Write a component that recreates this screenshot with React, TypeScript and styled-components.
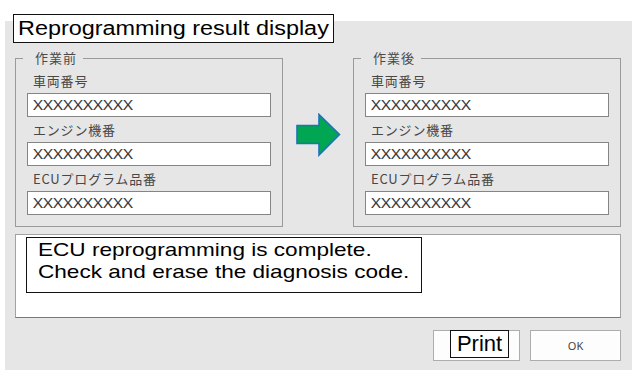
import styled, { createGlobalStyle } from "styled-components";

const GlobalStyle = createGlobalStyle`
  html, body {
    margin: 0;
    padding: 0;
    background: #ffffff;
  }
  body {
    font-family: "Noto Sans CJK JP", "Noto Sans", sans-serif;
  }
`;

type Field = { label: string; value: string };

const fields: Field[] = [
  { label: "車両番号", value: "XXXXXXXXXX" },
  { label: "エンジン機番", value: "XXXXXXXXXX" },
  { label: "ECUプログラム品番", value: "XXXXXXXXXX" },
];

function FieldList() {
  return (
    <>
      {fields.map((f) => (
        <FieldBlock key={f.label}>
          <FieldLabel>{f.label}</FieldLabel>
          <ValueBox>
            <ValueText>{f.value}</ValueText>
          </ValueBox>
        </FieldBlock>
      ))}
    </>
  );
}

export default function App() {
  return (
    <>
      <GlobalStyle />
      <Panel>
        <TitleBox>
          <Stretch $scale={1.2}>Reprogramming result display</Stretch>
        </TitleBox>
        <GroupRow>
          <GroupBox $width={268}>
            <Legend>作業前</Legend>
            <FieldList />
          </GroupBox>
          <ArrowCol>
            <svg width="45" height="44" viewBox="0 0 45 44">
              <path
                d="M1 12.5 H23 V1.5 L43.5 21.5 L23 42 V30.5 H1 Z"
                fill="#00a651"
                stroke="#1f72b8"
                strokeWidth="1.6"
                strokeLinejoin="miter"
              />
            </svg>
          </ArrowCol>
          <GroupBox>
            <Legend>作業後</Legend>
            <FieldList />
          </GroupBox>
        </GroupRow>
        <MessageArea>
          <MessageBox>
            <Stretch $scale={1.22}>ECU reprogramming is complete.</Stretch>
            <Stretch $scale={1.22}>Check and erase the diagnosis code.</Stretch>
          </MessageBox>
        </MessageArea>
        <ButtonRow>
          <DialogButton $width={87}>
            <PrintLabel>Print</PrintLabel>
          </DialogButton>
          <DialogButton $width={91}>
            <OkLabel>OK</OkLabel>
          </DialogButton>
        </ButtonRow>
      </Panel>
    </>
  );
}

const Panel = styled.div`
  margin: 21px 0 0 5px;
  width: 627px;
  height: 349px;
  box-sizing: border-box;
  background: #e6e6e6;
  padding: 0 11px 9px 10px;
  display: flex;
  flex-direction: column;
`;

const Stretch = styled.span<{ $scale: number }>`
  display: block;
  white-space: nowrap;
  transform: scaleX(${(p) => p.$scale});
  transform-origin: left center;
`;

const TitleBox = styled.div`
  align-self: flex-start;
  margin: -7px 0 0 -2px;
  width: 321px;
  height: 29px;
  box-sizing: border-box;
  border: 1px solid #111;
  background: #fff;
  padding: 0 0 0 4px;
  font-family: "Liberation Sans", Arial, sans-serif;
  font-size: 19.5px;
  line-height: 27px;
  color: #000;
`;

const GroupRow = styled.div`
  display: flex;
  margin-top: 8px;
`;

const GroupBox = styled.fieldset<{ $width?: number }>`
  margin: 0;
  ${(p) => (p.$width ? `width: ${p.$width}px;` : "flex: 1;")}
  box-sizing: border-box;
  border: 1px solid #9a9a9a;
  padding: 3px 11px 11px 11px;
  min-width: 0;
`;

const Legend = styled.legend`
  margin-left: -4px;
  padding: 0 6px 0 12px;
  font-size: 13px;
  line-height: 14px;
  letter-spacing: 1px;
  color: #4a4a4a;
`;

const FieldBlock = styled.div`
  display: flex;
  flex-direction: column;
`;

const FieldLabel = styled.div`
  height: 25px;
  line-height: 25px;
  padding-left: 6px;
  font-size: 13px;
  letter-spacing: 0.8px;
  color: #474747;
  white-space: nowrap;
`;

const ValueBox = styled.div`
  height: 24px;
  box-sizing: border-box;
  border: 1px solid #858585;
  background: #fff;
  padding-left: 5px;
  display: flex;
  align-items: center;
`;

const ValueText = styled.span`
  display: block;
  font-family: "Noto Sans", sans-serif;
  font-size: 14px;
  line-height: 16px;
  color: #3a3a3a;
  transform: scaleX(1.22);
  transform-origin: left center;
`;

const ArrowCol = styled.div`
  width: 70px;
  display: flex;
  justify-content: center;
  align-items: flex-start;
  padding-top: 62px;
  padding-left: 1px;
  box-sizing: border-box;
`;

const MessageArea = styled.div`
  margin-top: 7px;
  height: 85px;
  box-sizing: border-box;
  border: 1px solid #a2a2a2;
  border-bottom-color: #7a7a7a;
  background: #fff;
  padding: 2px 0 0 10px;
`;

const MessageBox = styled.div`
  width: 396px;
  height: 56px;
  box-sizing: border-box;
  border: 1px solid #111;
  background: #fff;
  padding: 1px 0 0 11px;
  font-family: "Liberation Sans", Arial, sans-serif;
  font-size: 18.5px;
  line-height: 22px;
  color: #000;
`;

const ButtonRow = styled.div`
  margin-top: 12px;
  display: flex;
  justify-content: flex-end;
  gap: 10px;
`;

const DialogButton = styled.div<{ $width: number }>`
  width: ${(p) => p.$width}px;
  height: 31px;
  box-sizing: border-box;
  border: 1px solid #adadad;
  background: #fdfdfd;
  display: flex;
  align-items: flex-start;
  justify-content: center;
`;

const PrintLabel = styled.span`
  margin: -1px 0 0 6px;
  height: 28px;
  box-sizing: border-box;
  border: 1px solid #111;
  background: #fff;
  padding: 0 6px;
  font-family: "Liberation Sans", Arial, sans-serif;
  font-size: 22px;
  line-height: 26px;
  color: #000;
`;

const OkLabel = styled.span`
  margin-top: 8px;
  font-family: "Noto Sans", sans-serif;
  font-size: 11px;
  line-height: 14px;
  color: #444;
`;
